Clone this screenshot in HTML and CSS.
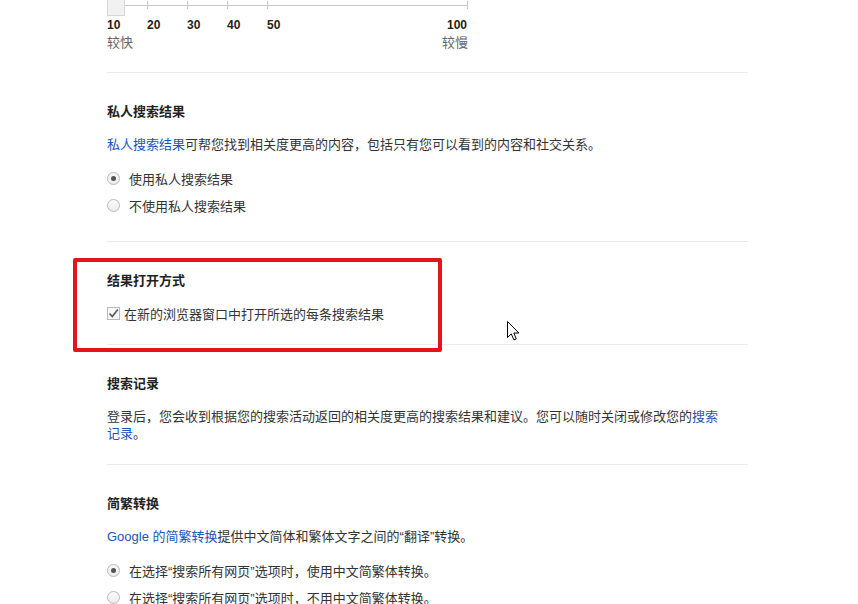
FILE: index.html
```html
<!DOCTYPE html>
<html lang="zh-CN">
<head>
  <meta charset="UTF-8" />
  <title>搜索设置</title>
  <link rel="stylesheet" href="styles.css">
</head>
<body>

  <div class="prefs">

    <!-- results per page slider (scrolled partly out of view) -->
    <div class="section slider-section">
      <div class="slider">
        <div class="track"></div>
        <span class="tick" style="left: 11.111%"></span>
        <span class="tick" style="left: 22.222%"></span>
        <span class="tick" style="left: 33.333%"></span>
        <span class="tick" style="left: 44.444%"></span>
        <span class="tick" style="left: 100%"></span>
        <div class="handle"></div>
      </div>
      <div class="scale">
        <span class="num" style="left: 0%">10</span>
        <span class="num" style="left: 11.111%">20</span>
        <span class="num" style="left: 22.222%">30</span>
        <span class="num" style="left: 33.333%">40</span>
        <span class="num" style="left: 44.444%">50</span>
        <span class="num last" style="left: 100%">100</span>
      </div>
      <div class="speed">
        <span>较快</span>
        <span>较慢</span>
      </div>
    </div>

    <div class="section">
      <h3>私人搜索结果</h3>
      <p class="desc"><a href="#">私人搜索结果</a>可帮您找到相关度更高的内容，包括只有您可以看到的内容和社交关系。</p>
      <label class="radio"><span class="dot checked"></span>使用私人搜索结果</label>
      <label class="radio"><span class="dot"></span>不使用私人搜索结果</label>
    </div>

    <div class="section">
      <h3>结果打开方式</h3>
      <label class="check"><span class="box">
        <svg width="11" height="11" viewBox="0 0 11 11"><path d="M1.5 5.5 L4.3 8.6 L9.8 1.6" fill="none" stroke="#555" stroke-width="1.6"/></svg>
      </span>在新的浏览器窗口中打开所选的每条搜索结果</label>
    </div>

    <div class="section">
      <h3>搜索记录</h3>
      <p class="desc para">登录后，您会收到根据您的搜索活动返回的相关度更高的搜索结果和建议。您可以随时关闭或修改您的<a href="#">搜索记录</a>。</p>
    </div>

    <div class="section">
      <h3>简繁转换</h3>
      <p class="desc"><a href="#">Google 的简繁转换</a>提供中文简体和繁体文字之间的“翻译”转换。</p>
      <label class="radio"><span class="dot checked"></span>在选择“搜索所有网页”选项时，使用中文简繁体转换。</label>
      <label class="radio"><span class="dot"></span>在选择“搜索所有网页”选项时，不用中文简繁体转换。</label>
    </div>

  </div>

  <!-- annotation drawn over the screenshot -->
  <div class="highlight"></div>

  <svg class="cursor" width="13" height="20" viewBox="0 0 13 20">
    <path d="M0.5 0.5 L0.5 16.5 L4.3 12.9 L6.9 18.9 L9.3 17.9 L6.8 12 L11.9 12 Z" fill="#fff" stroke="#000" stroke-width="1"/>
  </svg>

</body>
</html>
```

FILE: styles.css
```css
html {
  overflow: hidden;
}

body {
  margin: 0;
  background: #fff;
  font-family: 'Liberation Sans', 'Noto Sans CJK SC', sans-serif;
  font-size: 13px;
  color: #333;
}

.prefs {
  width: 641px;
  margin-left: 107px;
}

.section {
  border-top: 1px solid #ebebeb;
  padding: 30px 0 22px;
}

.section h3 {
  margin: 0 0 16px;
  font-size: 13px;
  line-height: 17px;
  font-weight: bold;
  color: #222;
}

.desc {
  margin: 0 0 12px;
  line-height: 17px;
}

.para {
  max-width: 620px;
  margin-bottom: 0;
}

a {
  color: #1a55b8;
  text-decoration: none;
}

/* slider */

.slider-section {
  border-top: none;
  padding: 0 0 20px;
}

.slider {
  position: relative;
  width: 360px;
  height: 18px;
  margin-top: -7px;
}

.track {
  position: absolute;
  left: 0;
  right: 0;
  top: 12px;
  height: 1px;
  background: #c8c8c8;
}

.tick {
  position: absolute;
  top: 8px;
  width: 1px;
  height: 8px;
  background: #c8c8c8;
}

.handle {
  position: absolute;
  left: 0;
  top: 0;
  width: 16px;
  height: 21px;
  background: #f1f1f1;
  border: 1px solid #d6d6d6;
}

.scale {
  position: relative;
  width: 360px;
  height: 18px;
  margin-top: 5px;
}

.num {
  position: absolute;
  top: 0;
  line-height: 18px;
  font-size: 12px;
  font-weight: bold;
  color: #222;
}

.num.last {
  transform: translateX(-100%);
}

.speed {
  display: flex;
  justify-content: space-between;
  width: 361px;
  line-height: 18px;
  color: #666;
}

/* radios and checkbox */

.radio {
  display: flex;
  align-items: center;
  height: 27px;
  gap: 9px;
}

.dot {
  width: 11px;
  height: 11px;
  border: 1px solid #b9b9b9;
  border-radius: 50%;
  background: linear-gradient(#fafafa, #ececec);
  display: flex;
  align-items: center;
  justify-content: center;
}

.dot.checked::after {
  content: "";
  width: 5px;
  height: 5px;
  border-radius: 50%;
  background: #555;
}

.check {
  display: flex;
  align-items: center;
  height: 17px;
  gap: 4px;
}

.box {
  width: 11px;
  height: 11px;
  border: 1px solid #b9b9b9;
  background: #f7f7f7;
  display: flex;
  align-items: center;
  justify-content: center;
}

.box svg {
  display: block;
}

/* overlays */

.highlight {
  position: absolute;
  left: 73px;
  top: 258px;
  width: 361px;
  height: 86px;
  border: 4px solid #e5141b;
  border-radius: 2px;
}

.cursor {
  position: absolute;
  left: 507px;
  top: 321px;
}
```
